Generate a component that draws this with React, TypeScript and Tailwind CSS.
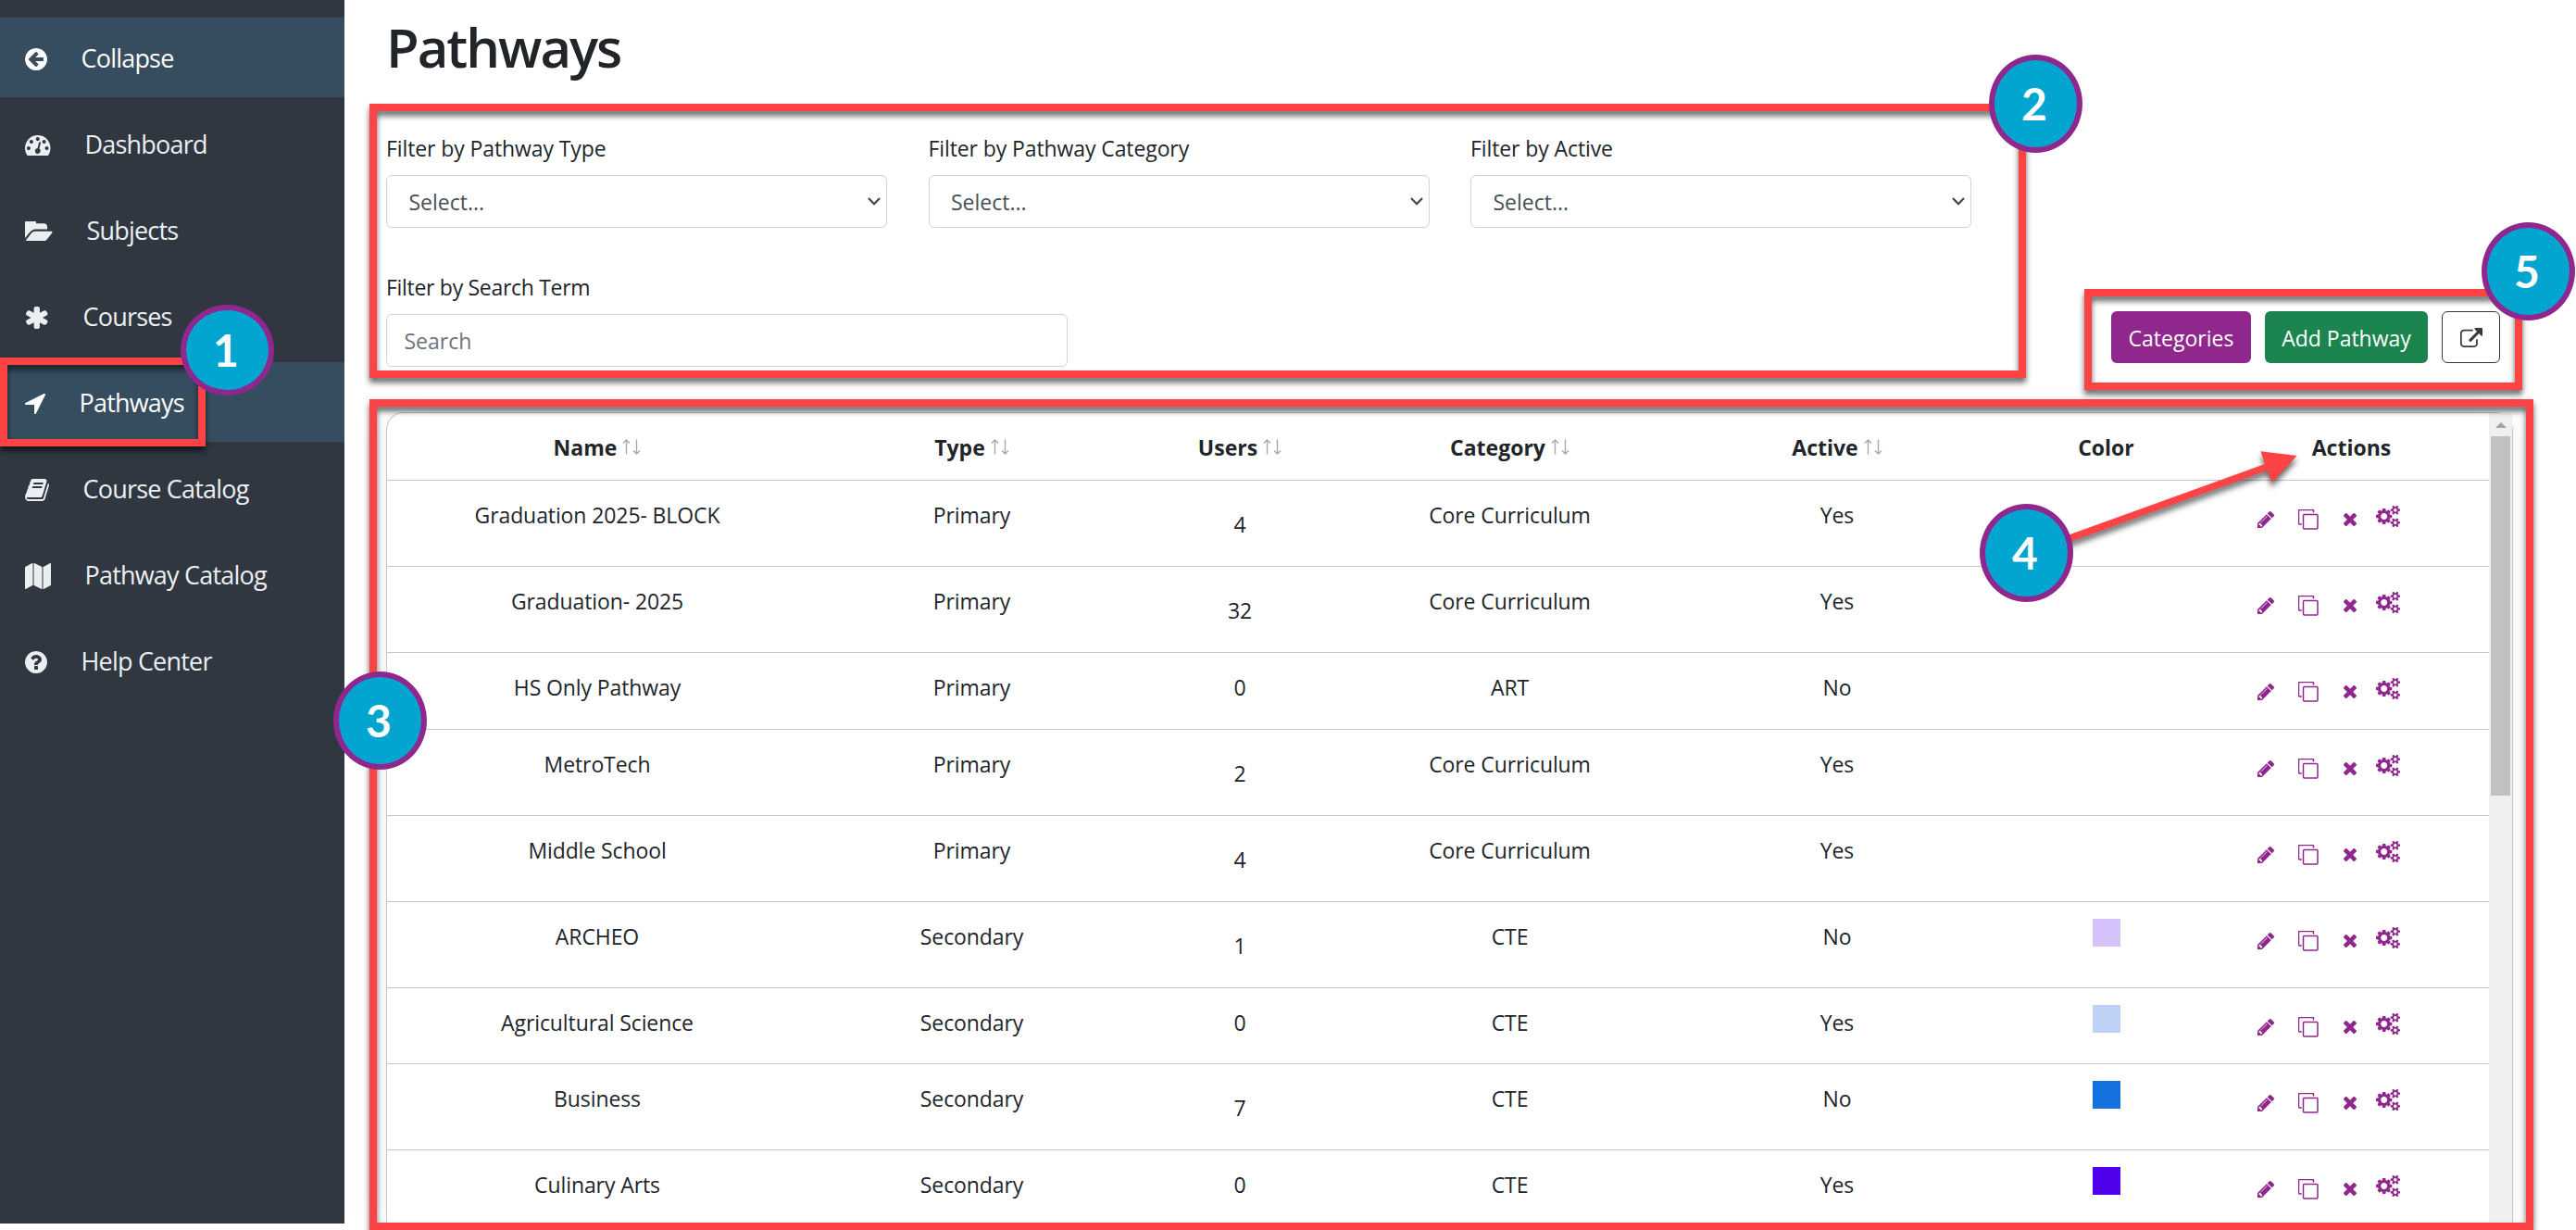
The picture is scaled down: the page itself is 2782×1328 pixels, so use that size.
const icons = {
    collapse: {
        box: '128 128 1536 1536',
        d: 'M1408 960v-128q0-26-19-45t-45-19h-502l189-189q19-19 19-45t-19-45l-91-91q-18-18-45-18t-45 18l-362 362-91 91q-18 18-18 45t18 45l91 91 362 362q18 18 45 18t45-18l91-91q18-18 18-45t-18-45l-189-189h502q26 0 45-19t19-45zm256-64q0 209-103 385.5t-279.5 279.5-385.5 103-385.5-103-279.5-279.5-103-385.5 103-385.5 279.5-279.5 385.5-103 385.5 103 279.5 279.5 103 385.5z',
    },
    dashboard: {
        box: '0 256 1792 1408',
        d: 'M384 1152q0-53-37.5-90.5t-90.5-37.5-90.5 37.5-37.5 90.5 37.5 90.5 90.5 37.5 90.5-37.5 37.5-90.5zm192-448q0-53-37.5-90.5t-90.5-37.5-90.5 37.5-37.5 90.5 37.5 90.5 90.5 37.5 90.5-37.5 37.5-90.5zm428 481l101-382q6-26-7.5-48.5t-38.5-29.5-48 6.5-30 39.5l-101 382q-60 5-107 43.5t-63 98.5q-20 77 20 146t117 89 146-20 89-117q16-60-6-117t-72-91zm660-33q0-53-37.5-90.5t-90.5-37.5-90.5 37.5-37.5 90.5 37.5 90.5 90.5 37.5 90.5-37.5 37.5-90.5zm-640-640q0-53-37.5-90.5t-90.5-37.5-90.5 37.5-37.5 90.5 37.5 90.5 90.5 37.5 90.5-37.5 37.5-90.5zm448 192q0-53-37.5-90.5t-90.5-37.5-90.5 37.5-37.5 90.5 37.5 90.5 90.5 37.5 90.5-37.5 37.5-90.5zm320 448q0 261-141 483-19 29-54 29h-1402q-35 0-54-29-141-221-141-483 0-182 71-348t191-286 286-191 348-71 348 71 286 191 191 286 71 348z',
    },
    folder: {
        box: '0 256 1879 1280',
        d: 'M1879 952q0 31-31 66l-336 396q-43 51-120.5 86.5t-143.5 35.5h-1088q-34 0-60.5-13t-26.5-43q0-31 31-66l336-396q43-51 120.5-86.5t143.5-35.5h1088q34 0 60.5 13t26.5 43zm-343-344v160h-832q-94 0-197 47.5t-164 119.5l-337 396-5 6q0-4-.5-12.5t-.5-12.5v-960q0-92 66-158t158-66h320q92 0 158 66t66 158v32h544q92 0 158 66t66 158z',
    },
    asterisk: {
        box: '181 128 1430 1536',
        d: 'M1546 1050q46 26 59.5 77.5t-12.5 97.5l-64 110q-26 46-77.5 59.5t-97.5-12.5l-266-153v307q0 52-38 90t-90 38h-128q-52 0-90-38t-38-90v-307l-266 153q-46 26-97.5 12.5t-77.5-59.5l-64-110q-26-46-12.5-97.5t59.5-77.5l266-154-266-154q-46-26-59.5-77.5t12.5-97.5l64-110q26-46 77.5-59.5t97.5 12.5l266 153v-307q0-52 38-90t90-38h128q52 0 90 38t38 90v307l266-153q46-26 97.5-12.5t77.5 59.5l64 110q26 46 12.5 97.5t-59.5 77.5l-266 154z',
    },
    location: {
        box: '192 256 1408 1408',
        d: 'M1593 349l-640 1280q-17 35-57 35-5 0-15-2-22-5-35.5-22.5t-13.5-39.5v-576h-576q-22 0-39.5-13.5t-22.5-35.5 4-42 29-30l1280-640q13-7 29-7 27 0 45 19 15 14 18.5 34.5t-6.5 39.5z',
    },
    book: {
        box: '62 128 1669 1536',
        d: 'M1703 478q40 57 18 129l-275 906q-19 64-76.5 107.5t-122.5 43.5h-923q-77 0-148.5-53.5t-99.5-131.5q-24-67-2-127 0-4 3-27t4-37q1-8-3-21.5t-3-19.5q2-11 8-21t16.5-23.5 16.5-23.5q23-38 45-91.5t30-91.5q3-10 .5-30t-.5-28q3-11 17-28t17-23q21-36 42-92t25-90q1-9-2.5-32t.5-28q4-13 22-30.5t22-22.5q19-26 42.5-84.5t27.5-96.5q1-8-3-25.5t-2-26.5q2-8 9-18t18-23 17-21q8-12 16.5-30.5t15-35 16-36 19.5-32 26.5-23.5 36-11.5 47.5 5.5l-1 3q38-9 51-9h761q74 0 114 56t18 130l-274 906q-36 119-71.5 153.5t-128.5 34.5h-869q-27 0-38 15-11 16-1 43 24 70 144 70h923q29 0 56-15.5t35-41.5l300-987q7-22 5-57 38 15 59 43zm-1064 2q-4 13 2 22.5t20 9.5h608q13 0 25.5-9.5t16.5-22.5l21-64q4-13-2-22.5t-20-9.5h-608q-13 0-25.5 9.5t-16.5 22.5zm-83 256q-4 13 2 22.5t20 9.5h608q13 0 25.5-9.5t16.5-22.5l21-64q4-13-2-22.5t-20-9.5h-608q-13 0-25.5 9.5t-16.5 22.5z',
    },
    map: {
        box: '0 0 1792 1792',
        d: 'M512 0q13 0 22.5 9.5t9.5 22.5v1472q0 20-17 28l-480 256q-7 4-15 4-13 0-22.5-9.5t-9.5-22.5v-1472q0-20 17-28l480-256q7-4 15-4zm1248 0q13 0 22.5 9.5t9.5 22.5v1472q0 20-17 28l-480 256q-7 4-15 4-13 0-22.5-9.5t-9.5-22.5v-1472q0-20 17-28l480-256q7-4 15-4zm-1120 0q8 0 14 3l512 256q18 10 18 29v1472q0 13-9.5 22.5t-22.5 9.5q-8 0-14-3l-512-256q-18-10-18-29v-1472q0-13 9.5-22.5t22.5-9.5z',
    },
    help: {
        box: '128 128 1536 1536',
        d: 'M1024 1376v-192q0-14-9-23t-23-9h-192q-14 0-23 9t-9 23v192q0 14 9 23t23 9h192q14 0 23-9t9-23zm256-672q0-88-55.5-163t-138.5-116-170-41q-243 0-371 213-15 24 8 42l132 100q7 6 19 6 16 0 25-12 53-68 86-92 34-24 86-24 48 0 85.5 26t37.5 59q0 38-20 61t-68 45q-63 28-115.5 86.5t-52.5 125.5v36q0 14 9 23t23 9h192q14 0 23-9t9-23q0-19 21.5-49.5t54.5-49.5q32-18 49-28.5t46-35 44.5-48 28-60.5 12.5-81zm384 192q0 209-103 385.5t-279.5 279.5-385.5 103-385.5-103-279.5-279.5-103-385.5 103-385.5 279.5-279.5 385.5-103 385.5 103 279.5 279.5 103 385.5z',
    },
    external: {
        box: '0 0 1792 1536',
        d: 'M1408 928v320q0 119-84.5 203.5t-203.5 84.5h-832q-119 0-203.5-84.5t-84.5-203.5v-832q0-119 84.5-203.5t203.5-84.5h704q14 0 23 9t9 23v64q0 14-9 23t-23 9h-704q-66 0-113 47t-47 113v832q0 66 47 113t113 47h832q66 0 113-47t47-113v-320q0-14 9-23t23-9h64q14 0 23 9t9 23zm384-864v512q0 26-19 45t-45 19-45-19l-176-176-652 652q-10 10-23 10t-23-10l-114-114q-10-10-10-23t10-23l652-652-176-176q-19-19-19-45t19-45 45-19h512q26 0 45 19t19 45z',
    },
    pencil: {
        box: '128 149 1515 1515',
        d: 'M491 1536l91-91-235-235-91 91v107h128v128h107zm523-928q0-22-22-22-10 0-17 7l-542 542q-7 7-7 17 0 22 22 22 10 0 17-7l542-542q7-7 7-17zm-54-192l416 416-832 832h-416v-416zm683 96q0 53-37 90l-166 166-416-416 166-165q36-38 90-38 53 0 91 38l235 234q37 39 37 91z',
    },
    times: {
        box: '302 366 1188 1188',
        d: 'M1490 1322q0 40-28 68l-136 136q-28 28-68 28t-68-28l-294-294-294 294q-28 28-68 28t-68-28l-136-136q-28-28-28-68t28-68l294-294-294-294q-28-28-28-68t28-68l136-136q28-28 68-28t68 28l294 294 294-294q28-28 68-28t68 28l136 136q28 28 28 68t-28 68l-294 294 294 294q28 28 28 68z',
    },
    cogs: {
        box: '-64 31 1920 1730',
        d: 'M832 896q0-106-75-181t-181-75-181 75-75 181 75 181 181 75 181-75 75-181zm768 512q0-52-38-90t-90-38-90 38-38 90q0 53 37.5 90.5t90.5 37.5 90.5-37.5 37.5-90.5zm0-1024q0-52-38-90t-90-38-90 38-38 90q0 53 37.5 90.5t90.5 37.5 90.5-37.5 37.5-90.5zm-384 421v185q0 10-7 19.5t-16 10.5l-155 24q-11 35-32 76 34 48 90 115 7 11 7 20 0 12-7 19-23 30-82.5 89.5t-78.5 59.5q-11 0-21-7l-115-90q-37 19-77 31-11 108-23 155-7 24-30 24h-186q-11 0-20-7.5t-10-17.5l-23-153q-34-10-75-31l-118 89q-7 7-20 7-11 0-21-8-144-133-144-160 0-9 7-19 10-14 41-53t47-61q-23-44-35-82l-152-24q-10-1-17-9.5t-7-19.5v-185q0-10 7-19.5t16-10.5l155-24q11-35 32-76-34-48-90-115-7-11-7-20 0-12 7-20 22-30 82-89t79-59q11 0 21 7l115 90q34-18 77-32 11-108 23-154 7-24 30-24h186q11 0 20 7.5t10 17.5l23 153q34 10 75 31l118-89q8-7 20-7 11 0 21 8 144 133 144 160 0 8-7 19-12 16-42 54t-45 60q23 48 34 82l152 23q10 2 17 10.5t7 19.5zm640 533v140q0 16-149 31-12 27-30 52 51 113 51 138 0 4-4 7-122 71-124 71-8 0-46-47t-52-68q-20 2-30 2t-30-2q-14 21-52 68t-46 47q-2 0-124-71-4-3-4-7 0-25 51-138-18-25-30-52-149-15-149-31v-140q0-16 149-31 13-29 30-52-51-113-51-138 0-4 4-7 4-2 35-20t59-34 30-16q8 0 46 46.5t52 67.5q20-2 30-2t30 2q51-71 92-112l6-2q4 0 124 70 4 3 4 7 0 25-51 138 17 23 30 52 149 15 149 31zm0-1024v140q0 16-149 31-12 27-30 52 51 113 51 138 0 4-4 7-122 71-124 71-8 0-46-47t-52-68q-20 2-30 2t-30-2q-14 21-52 68t-46 47q-2 0-124-71-4-3-4-7 0-25 51-138-18-25-30-52-149-15-149-31v-140q0-16 149-31 13-29 30-52-51-113-51-138 0-4 4-7 4-2 35-20t59-34 30-16q8 0 46 46.5t52 67.5q20-2 30-2t30 2q51-71 92-112l6-2q4 0 124 70 4 3 4 7 0 25-51 138 17 23 30 52 149 15 149 31z',
    },
};

type IconName = keyof typeof icons;

function Icon({ name, className }: { name: IconName; className: string }) {
    return (
        <svg viewBox={icons[name].box} preserveAspectRatio="none" fill="currentColor" className={`shrink-0 ${className}`}>
            <path d={icons[name].d} />
        </svg>
    );
}

const navItems: { label: string; icon: IconName; slot: string; size: string; active?: boolean }[] = [
    { label: 'Collapse', icon: 'collapse', slot: 'w-[24px]', size: 'w-[24px] h-[24px]', active: true },
    { label: 'Dashboard', icon: 'dashboard', slot: 'w-[28px]', size: 'w-[27.5px] h-[22px]' },
    { label: 'Subjects', icon: 'folder', slot: 'w-[30px]', size: 'w-[29.5px] h-[21.5px]' },
    { label: 'Courses', icon: 'asterisk', slot: 'w-[26px] pl-px', size: 'w-[23.5px] h-[24px]' },
    { label: 'Pathways', icon: 'location', slot: 'w-[22px]', size: 'w-[22px] h-[22px]', active: true },
    { label: 'Course Catalog', icon: 'book', slot: 'w-[26px]', size: 'w-[26px] h-[24px]' },
    { label: 'Pathway Catalog', icon: 'map', slot: 'w-[28px]', size: 'w-[28px] h-[28px]' },
    { label: 'Help Center', icon: 'help', slot: 'w-[24px]', size: 'w-[24px] h-[24px]' },
];

const filters = ['Filter by Pathway Type', 'Filter by Pathway Category', 'Filter by Active'];

const columns = [
    { label: 'Name', sortable: true },
    { label: 'Type', sortable: true },
    { label: 'Users', sortable: true },
    { label: 'Category', sortable: true },
    { label: 'Active', sortable: true },
    { label: 'Color', sortable: false },
    { label: 'Actions', sortable: false },
];

const pathways = [
    { name: 'Graduation 2025- BLOCK', type: 'Primary', users: 4, category: 'Core Curriculum', active: 'Yes', height: 'h-[93px]' },
    { name: 'Graduation- 2025', type: 'Primary', users: 32, category: 'Core Curriculum', active: 'Yes', height: 'h-[93px]' },
    { name: 'HS Only Pathway', type: 'Primary', users: 0, category: 'ART', active: 'No', height: 'h-[83px]' },
    { name: 'MetroTech', type: 'Primary', users: 2, category: 'Core Curriculum', active: 'Yes', height: 'h-[93px]' },
    { name: 'Middle School', type: 'Primary', users: 4, category: 'Core Curriculum', active: 'Yes', height: 'h-[93px]' },
    { name: 'ARCHEO', type: 'Secondary', users: 1, category: 'CTE', active: 'No', color: 'bg-[#d5c2fa]', height: 'h-[93px]' },
    { name: 'Agricultural Science', type: 'Secondary', users: 0, category: 'CTE', active: 'Yes', color: 'bg-[#bfd2f5]', height: 'h-[82px]' },
    { name: 'Business', type: 'Secondary', users: 7, category: 'CTE', active: 'No', color: 'bg-[#1372df]', height: 'h-[93px]' },
    { name: 'Culinary Arts', type: 'Secondary', users: 0, category: 'CTE', active: 'Yes', color: 'bg-[#5000ea]', height: 'h-[83px]' },
];

const rowGrid = 'grid grid-cols-[454px_355px_224px_359px_348px_233px_297px] border-b border-[#c6c6c6]';

function SortIcon() {
    return (
        <svg viewBox="0 0 20 17" fill="none" stroke="#a9a9a9" strokeWidth="1.4" className="w-[20px] h-[17px] ml-[6px] mb-px">
            <path d="M4.5 16.5V1M1 4.5L4.5 1L8 4.5M15.5 .5V16M12 12.5L15.5 16L19 12.5" />
        </svg>
    );
}

function CopyIcon() {
    return (
        <svg viewBox="0 0 22 22" fill="none" stroke="currentColor" strokeWidth="1.5" className="w-[22px] h-[22px] shrink-0 mt-[31px] ml-[26px]">
            <rect x="5.5" y="5.5" width="15.5" height="15.5" rx="1" />
            <path d="M16.5 3.6V1.5q0-1-1-1H1.5q-1 0-1 1V15q0 1 1 1H3.8" />
        </svg>
    );
}

function Sidebar() {
    return (
        <aside className="w-[372px] h-[1321px] shrink-0 bg-[#303741] pt-[19px] flex flex-col gap-[7px]">
            {navItems.map((item) => (
                <div
                    key={item.label}
                    className={`h-[86px] pl-[27px] flex items-center ${item.active ? 'bg-[#364d5f] text-white' : 'text-[#eceff2]'}`}
                >
                    <span className={`${item.slot} shrink-0 mt-[3px]`}>
                        <Icon name={item.icon} className={item.size} />
                    </span>
                    <span className="ml-[36.5px] text-[27px] leading-[40px] tracking-[-0.8px] mt-px whitespace-nowrap">{item.label}</span>
                </div>
            ))}
        </aside>
    );
}

function Filters() {
    return (
        <>
            <div className="mt-[55px] flex gap-[44.5px]">
                {filters.map((label) => (
                    <div key={label} className="w-[541px]">
                        <div className="leading-[36px] tracking-[-0.1px]">{label}</div>
                        <div className="mt-[11px] h-[57px] rounded-[6px] border border-[#ced4da] bg-white pl-[23.5px] pr-[6px] flex items-center justify-between text-[#495057]">
                            <span className="pt-px">Select...</span>
                            <svg viewBox="0 0 14 9" fill="none" stroke="#3f464d" strokeWidth="2.2" className="w-[14px] h-[9px]">
                                <path d="M1 1L7 7.2L13 1" />
                            </svg>
                        </div>
                    </div>
                ))}
            </div>
            <div className="mt-[46px] flex justify-between">
                <div className="w-[736px]">
                    <div className="leading-[36px] tracking-[-0.3px]">Filter by Search Term</div>
                    <div className="mt-[11px] h-[57px] rounded-[6px] border border-[#ced4da] bg-white pl-[18.5px] pt-px flex items-center text-[#6c757d]">
                        Search
                    </div>
                </div>
                <div className="mt-[44px] mr-[14px] h-[56px] flex gap-[15px]">
                    <button className="w-[151px] rounded-[6px] bg-[#8f278d] text-white pt-[2px]">Categories</button>
                    <button className="w-[176px] rounded-[6px] bg-[#1c844f] text-white pt-[2px]">Add Pathway</button>
                    <button className="w-[63px] rounded-[6px] border border-[#343a40] text-[#343a40] flex items-center justify-center">
                        <Icon name="external" className="w-[24px] h-[21px]" />
                    </button>
                </div>
            </div>
        </>
    );
}

function PathwayTable() {
    return (
        <div className="mt-[49px] h-[875px] rounded-t-[19px] border border-b-0 border-[#c6c6c6] bg-white shadow-[0_0_40px_rgba(0,0,0,0.06)] flex">
            <div className="w-[2270px] shrink-0 h-full overflow-hidden text-center">
                <div className={`${rowGrid} h-[73px] pt-[19px] font-bold text-[#212529]`}>
                    {columns.map((col) => (
                        <div key={col.label} className="h-[36px] flex items-center justify-center">
                            {col.label}
                            {col.sortable && <SortIcon />}
                        </div>
                    ))}
                </div>
                {pathways.map((row) => (
                    <div key={row.name} className={`${rowGrid} ${row.height} leading-[36px] tracking-[-0.1px]`}>
                        <div className="pt-[19px]">{row.name}</div>
                        <div className="pt-[19px]">{row.type}</div>
                        <div className={row.users ? 'pt-[29px]' : 'pt-[19px]'}>{row.users}</div>
                        <div className="pt-[19px]">{row.category}</div>
                        <div className="pt-[19px]">{row.active}</div>
                        <div className="pt-[18px]">{row.color && <div className={`mx-auto size-[30px] ${row.color}`} />}</div>
                        <div className="pl-[47px] flex items-start text-[#8f278d]">
                            <Icon name="pencil" className="w-[18px] h-[18px] mt-[33px]" />
                            <CopyIcon />
                            <Icon name="times" className="w-[14px] h-[14px] mt-[35px] ml-[27px]" />
                            <Icon name="cogs" className="w-[26px] h-[23px] mt-[27px] ml-[21px]" />
                        </div>
                    </div>
                ))}
            </div>
            <div className="w-[25px] shrink-0 h-full bg-[#f0f0f0] flex flex-col items-center">
                <svg viewBox="0 0 12 6" className="w-[12px] h-[6px] mt-[10px]">
                    <path d="M6 0L12 6H0z" fill="#a3a3a3" />
                </svg>
                <div className="mt-[9px] w-[21px] h-[388px] bg-[#c1c1c1]" />
            </div>
        </div>
    );
}

// Numbered call-outs drawn on top of the page
const frames = [
    'left-0 top-[386px] w-[222px] h-[96px]',
    'left-[399px] top-[112px] w-[1789px] h-[296px]',
    'left-[399px] top-[431px] w-[2337px] h-[897px]',
    'left-[2251px] top-[312px] w-[473px] h-[109px]',
];

const badges = [
    'left-[195px] top-[329px] h-[98px]',
    'left-[2148px] top-[59px] h-[106px]',
    'left-[360px] top-[725px] h-[106px]',
    'left-[2138px] top-[544px] h-[106px]',
    'left-[2680px] top-[240px] h-[106px]',
];

function Annotations() {
    return (
        <>
            {frames.map((place) => (
                <div key={place} className={`absolute border-8 border-[#fd4343] drop-shadow-[0_5px_3px_rgba(0,0,0,0.6)] ${place}`} />
            ))}
            <svg
                viewBox="0 0 260 110"
                className="absolute left-[2230px] top-[480px] w-[260px] h-[110px] overflow-visible drop-shadow-[0_5px_3px_rgba(0,0,0,0.6)]"
            >
                <path d="M0 103L220 23.5" stroke="#fd4343" strokeWidth="7.5" />
                <path d="M250.6 12L211.3 7.3L223.5 41z" fill="#fd4343" />
            </svg>
            {badges.map((place, index) => (
                <div
                    key={place}
                    className={`absolute w-[101px] rounded-[50%] border-[6px] border-[#90278e] bg-[#02a5d0] flex items-center justify-center pr-[3px] font-['Lato',sans-serif] font-bold text-[48px] leading-none text-white ${place}`}
                >
                    {index + 1}
                </div>
            ))}
        </>
    );
}

export default function App() {
    return (
        <div className="relative w-full h-[1328px] overflow-hidden bg-white flex font-['Open_Sans',sans-serif] text-[23px] text-[#212529]">
            <Sidebar />
            <main className="flex-1 min-w-0 pl-[45px] pr-[68px] pt-[15px]">
                <h1 className="text-[58px] leading-[72px] font-semibold tracking-[-2px]">Pathways</h1>
                <Filters />
                <PathwayTable />
            </main>
            <Annotations />
        </div>
    );
}
